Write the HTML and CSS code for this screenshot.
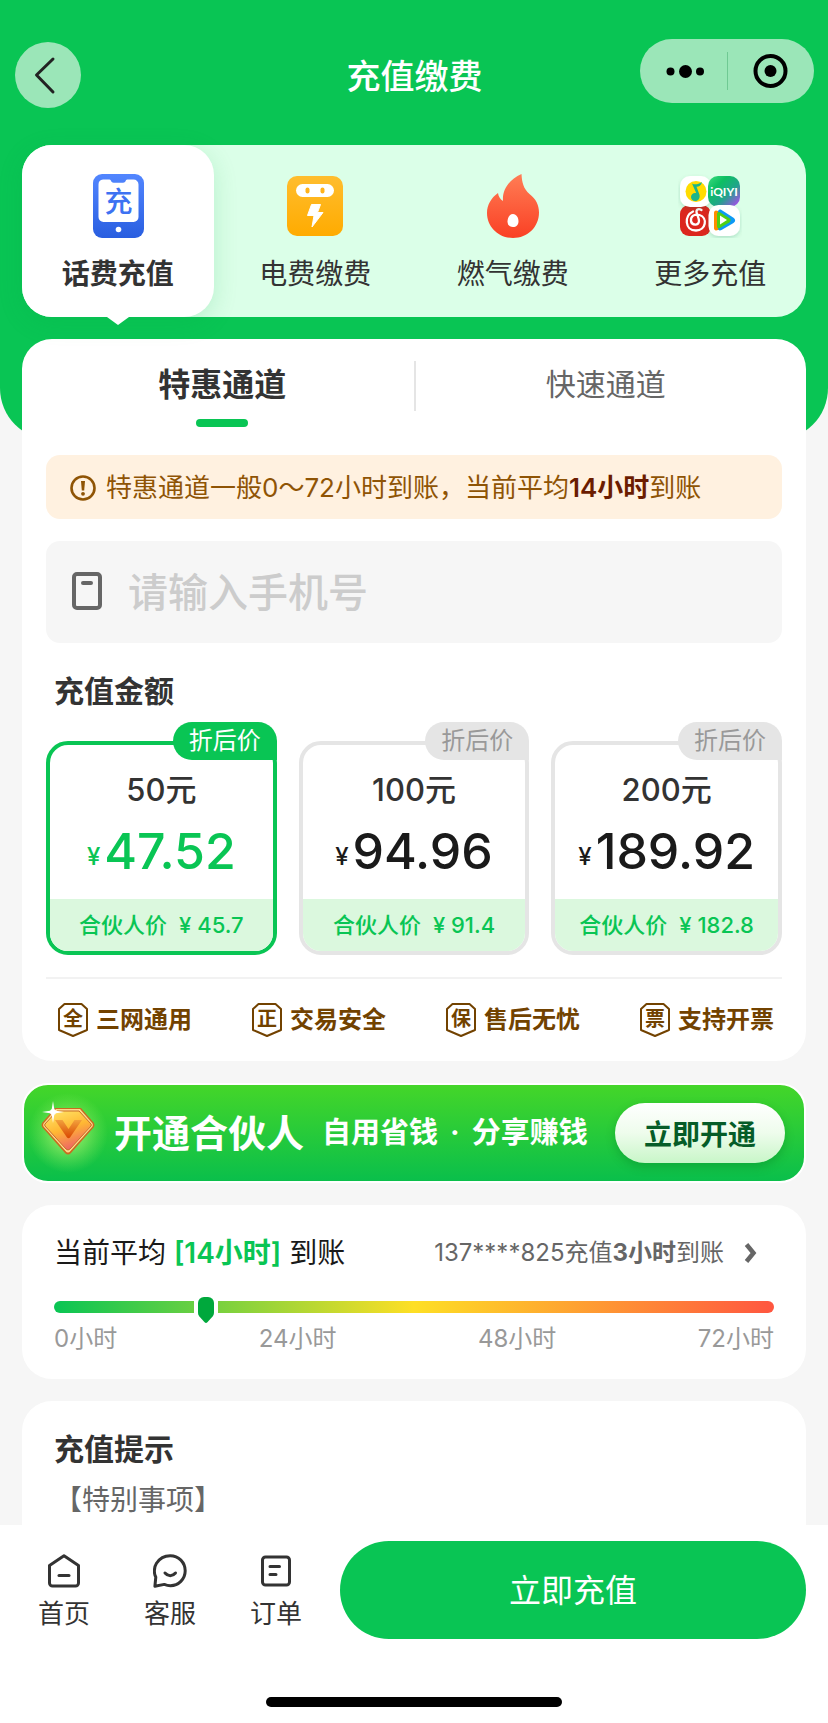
FILE: index.html
```html
<!DOCTYPE html>
<html lang="zh-CN">
<head>
<meta charset="utf-8">
<meta name="viewport" content="width=device-width, initial-scale=1">
<title>充值缴费</title>
<link rel="stylesheet" href="styles.css">
</head>
<body>
<div class="app">
  <main class="scroll">
    <div class="hero">
      <header class="topbar">
        <button class="back" type="button" aria-label="返回">
          <svg width="66" height="66" viewBox="0 0 66 66" fill="none" stroke="#222" stroke-width="3" stroke-linecap="round" stroke-linejoin="round"><path d="M38 17 21.500 33 38 50"/></svg>
        </button>
        <h1 class="topbar-title">充值缴费</h1>
        <div class="capsule">
          <button class="capsule-btn" type="button" aria-label="更多">
            <svg width="44" height="40" viewBox="0 0 44 40"><circle cx="9.500" cy="20.500" r="4"/><circle cx="24.500" cy="20.500" r="6.500"/><circle cx="39" cy="20.500" r="4"/></svg>
          </button>
          <span class="capsule-line"></span>
          <button class="capsule-btn" type="button" aria-label="关闭">
            <svg width="40" height="40" viewBox="0 0 40 40"><circle cx="19.500" cy="20" r="15" fill="none" stroke="#000" stroke-width="4"/><circle cx="19.500" cy="20" r="6"/></svg>
          </button>
        </div>
      </header>

      <nav class="services">
        <button class="service is-active" type="button">
          <svg class="service-icon" width="64" height="64" viewBox="0 0 64 64">
            <defs><linearGradient id="blue" x1="0" y1="0" x2="0" y2="1"><stop offset="0" stop-color="#5286ff"/><stop offset="1" stop-color="#295ee0"/></linearGradient></defs>
            <rect x="7" y="0" width="51" height="64" rx="9" fill="url(#blue)"/>
            <path d="M17 5.500h6.500c1 0 1.200.8 1.600 1.600.5 1.200 1.200 1.700 2.500 1.700h9.500c1.300 0 2-.5 2.500-1.700.4-.8.600-1.600 1.600-1.600H47.500a5 5 0 0 1 5 5V43a5 5 0 0 1-5 5H17.500a5 5 0 0 1-5-5V10.500a5 5 0 0 1 4.500-5z" fill="#fff"/>
            <circle cx="32.500" cy="55.500" r="2.800" fill="#fff"/>
            <text x="32.500" y="38" text-anchor="middle" class="phone-mark">充</text>
          </svg>
          <span>话费充值</span>
        </button>
        <button class="service" type="button">
          <svg class="service-icon" width="64" height="64" viewBox="0 0 64 64">
            <defs><linearGradient id="amber" x1="0" y1="0" x2="0" y2="1"><stop offset="0" stop-color="#ffbd2e"/><stop offset="1" stop-color="#ffab00"/></linearGradient></defs>
            <rect x="4" y="2" width="56" height="60" rx="10" fill="url(#amber)"/>
            <rect x="13" y="10" width="38" height="13" rx="6.500" fill="#fff"/>
            <rect x="22.500" y="13.500" width="4" height="6" rx="2" fill="#ffb31a"/><rect x="37.500" y="13.500" width="4" height="6" rx="2" fill="#ffb31a"/>
            <path d="M28.500 30.500h9l-3 8h5.500L29 53l2-11.500h-6.500z" fill="#fff" stroke="#fff" stroke-width="1" stroke-linejoin="round"/>
          </svg>
          <span>电费缴费</span>
        </button>
        <button class="service" type="button">
          <svg class="service-icon" width="64" height="64" viewBox="0 0 64 64">
            <defs><linearGradient id="fire" x1="0" y1="0" x2="0" y2="1"><stop offset="0" stop-color="#ff7d55"/><stop offset="1" stop-color="#fa4024"/></linearGradient></defs>
            <path d="M40.500 0c.5 9 2 14.500 8 20C55 25 58 31 58 38.500 58 53 46.500 64 32 64S6 53 6 39c0-8 4-15 11-20 .5 3.500 2 6 5 8C21 15 28.500 5.500 40.500 0z" fill="url(#fire)"/>
            <path d="M32 40c3.500 0 5.500 4 5.500 7.500s-2.300 5.500-5.500 5.500-5.500-2-5.500-5.500S28.500 40 32 40z" fill="#fff"/>
          </svg>
          <span>燃气缴费</span>
        </button>
        <button class="service" type="button">
          <svg class="service-icon" width="64" height="64" viewBox="0 0 64 64">
            <defs>
              <linearGradient id="iq" x1="0" y1="0" x2="1" y2="1"><stop offset="0" stop-color="#3ddd80"/><stop offset=".3" stop-color="#0dbf62"/><stop offset=".6" stop-color="#20a58a"/><stop offset="1" stop-color="#c03cff"/></linearGradient>
              <filter id="soft" x="-30%" y="-30%" width="160%" height="160%"><feDropShadow dx="0" dy="2" stdDeviation="2" flood-color="#0a7040" flood-opacity=".2"/></filter>
            </defs>
            <rect x="2" y="31" width="31" height="31" rx="9" fill="#dc261e"/>
            <g fill="none" stroke="#fff" stroke-width="2.300" stroke-linecap="round"><path d="M15 37.500c-9 4-8.500 19 3 19 10 0 12-13 3.500-15.500-6-1.500-9 2-8.500 6 .5 4.500 8 5 8 0 0-3-2-6-2.500-9-.3-3 2.500-3.500 5-2"/></g>
            <rect x="2" y="2" width="31" height="31" rx="10" fill="#fff" filter="url(#soft)"/>
            <circle cx="18" cy="17.500" r="10.500" fill="#ffdc00"/>
            <path d="M14 9.500c3 1.500 6 1 10-1.500-.8 3.500-3 4.800-5.500 4.800l3 8c.8 3.500-1.300 6.300-4.300 6.300-2.700 0-4.200-2-4.200-4 0-2.800 2.300-4.600 5.200-4z" fill="#1bb58a"/>
            <rect x="30" y="2" width="32" height="31" rx="10" fill="url(#iq)"/>
            <text x="46" y="22" text-anchor="middle" class="iq-mark">iQIYI</text>
            <rect x="30.500" y="31" width="31.500" height="31" rx="10" fill="#fff" filter="url(#soft)"/>
            <path d="M36 39c0-1.500.8-2.500 2-2.500l4 1v18l-4 1c-1.200 0-2-1-2-2.500z" fill="#ff8c00"/>
            <path d="M40 38c0-2 1.500-3 3.500-2l12 7.700c2.200 1.500 2.200 3.800 0 5.300L43.500 56c-2 1-3.500.2-3.500-2z" fill="#0c99f5"/>
            <path d="M39 40c0-2 1.500-2.500 3-1.700l9.500 6c1.500 1 1.500 3 0 4L42 54c-1.500.8-3 .3-3-1.700z" fill="#4fd016"/>
            <path d="M42 41.500v9l7-4.500z" fill="#fff"/>
          </svg>
          <span>更多充值</span>
        </button>
      </nav>
    </div>

    <section class="card recharge">
      <div class="tabs" role="tablist">
        <button class="tab is-active" type="button" role="tab" aria-selected="true">特惠通道</button>
        <button class="tab" type="button" role="tab" aria-selected="false">快速通道</button>
      </div>

      <p class="notice">
        <svg width="26" height="26" viewBox="0 0 26 26"><circle cx="13" cy="13" r="11.500" fill="none" stroke="#8f5405" stroke-width="2.600"/><path d="M11 6h4l-.8 9.500h-2.400z" fill="#8f5405"/><circle cx="13" cy="18.800" r="1.900" fill="#8f5405"/></svg>
        <span>特惠通道一般0～72小时到账，当前平均<strong>14小时</strong>到账</span>
      </p>

      <label class="phone">
        <svg width="30" height="38" viewBox="0 0 30 38" fill="none" stroke="#666" stroke-width="4" stroke-linecap="round"><rect x="2" y="2" width="26" height="34" rx="3"/><path d="M11 11h8"/></svg>
        <input type="tel" placeholder="请输入手机号" aria-label="手机号">
      </label>

      <h2 class="heading amount-heading">充值金额</h2>
      <div class="amounts">
        <label class="amount is-active">
          <input type="radio" name="amount" checked>
          <span class="tag">折后价</span>
          <span class="face">50元</span>
          <span class="price"><small>¥</small>47.52</span>
          <span class="partner"><span>合伙人价</span><span>¥ 45.7</span></span>
        </label>
        <label class="amount">
          <input type="radio" name="amount">
          <span class="tag">折后价</span>
          <span class="face">100元</span>
          <span class="price"><small>¥</small>94.96</span>
          <span class="partner"><span>合伙人价</span><span>¥ 91.4</span></span>
        </label>
        <label class="amount">
          <input type="radio" name="amount">
          <span class="tag">折后价</span>
          <span class="face">200元</span>
          <span class="price"><small>¥</small>189.92</span>
          <span class="partner"><span>合伙人价</span><span>¥ 182.8</span></span>
        </label>
      </div>

      <ul class="features">
        <li><svg width="30" height="34" viewBox="0 0 30 34"><path d="M6.500 1h17L29 6v21l-14 6L1 27V6z"/><text x="15" y="23">全</text></svg>三网通用</li>
        <li><svg width="30" height="34" viewBox="0 0 30 34"><path d="M6.500 1h17L29 6v21l-14 6L1 27V6z"/><text x="15" y="23">正</text></svg>交易安全</li>
        <li><svg width="30" height="34" viewBox="0 0 30 34"><path d="M6.500 1h17L29 6v21l-14 6L1 27V6z"/><text x="15" y="23">保</text></svg>售后无忧</li>
        <li><svg width="30" height="34" viewBox="0 0 30 34"><path d="M6.500 1h17L29 6v21l-14 6L1 27V6z"/><text x="15" y="23">票</text></svg>支持开票</li>
      </ul>
    </section>

    <section class="banner">
      <svg class="gem" width="80" height="80" viewBox="0 0 80 80">
        <defs>
          <radialGradient id="glow"><stop offset="0" stop-color="#d8ff80" stop-opacity=".8"/><stop offset=".5" stop-color="#b0f570" stop-opacity=".45"/><stop offset="1" stop-color="#8ff060" stop-opacity="0"/></radialGradient>
          <linearGradient id="gold" x1="0" y1="0" x2=".4" y2="1"><stop offset="0" stop-color="#ffe96b"/><stop offset=".55" stop-color="#ffb733"/><stop offset="1" stop-color="#ef6a62"/></linearGradient>
          <linearGradient id="vee" x1="0" y1="0" x2="0" y2="1"><stop offset="0" stop-color="#f2a13c"/><stop offset="1" stop-color="#d94700"/></linearGradient>
        </defs>
        <circle cx="40" cy="40" r="40" fill="url(#glow)"/>
        <path d="M27 15h26l13 15q1 2 0 4L43 60q-3 3-6 0L14 34q-1-2 0-4z" fill="#c96b20"/>
        <path d="M28 16h24l12.500 14.500q.8 1.500 0 3L42.500 58q-2.500 3-5 0L15.500 33.500q-.8-1.500 0-3z" fill="#ffd98a"/>
        <path d="M29 18h22l12 13q.6 1 0 2L42 56q-2 2-4 0L17 33q-.6-1 0-2z" fill="url(#gold)" stroke="#c76c2a" stroke-width="1"/>
        <path d="M27 27h7.500l6 9 6-9H54L42 44.500q-1.500 1.500-3 0z" fill="url(#vee)"/>
        <path d="M25 8l1.500 9.500L36 19l-9.500 1.500L25 30l-1.500-9.500L14 19l9.500-1.500z" fill="#fff"/>
        <circle cx="25" cy="19" r="3" fill="#fff"/>
      </svg>
      <strong class="banner-title">开通合伙人</strong>
      <p class="banner-text"><span>自用省钱</span><span>·</span><span>分享赚钱</span></p>
      <button class="banner-btn" type="button">立即开通</button>
    </section>

    <section class="card arrival">
      <div class="arrival-head">
        <p class="arrival-avg">当前平均 <b>[14小时]</b> 到账</p>
        <a class="arrival-recent" href="#records">137****825充值<b>3小时</b>到账
          <svg width="14" height="20" viewBox="0 0 14 20" fill="none" stroke="#666" stroke-width="4.500"><path d="M2.500 1.500 9.500 10 2.500 18.500"/></svg>
        </a>
      </div>
      <div class="meter">
        <span class="meter-pin" style="left:21.100%"><svg width="16" height="26" viewBox="0 0 16 26"><path d="M6 0h4a6 6 0 0 1 6 6v9c0 2-.4 3.200-1.400 4.500L9.400 25.200q-1.400 1.400-2.800 0L1.400 19.500C.4 18.200 0 17 0 15V6a6 6 0 0 1 6-6z" fill="#00a83c"/></svg></span>
      </div>
      <div class="meter-scale"><span>0小时</span><span>24小时</span><span>48小时</span><span>72小时</span></div>
    </section>

    <section class="card tips">
      <h2 class="heading">充值提示</h2>
      <p>【特别事项】</p>
    </section>
  </main>

  <footer class="dock">
    <div class="dock-row">
      <nav class="dock-nav">
        <a href="#home"><svg width="34" height="34" viewBox="0 0 34 34"><path d="M17 1.800 31.500 11.500V29a3 3 0 0 1-3 3h-23a3 3 0 0 1-3-3V11.500z"/><path d="M12 21.500h10"/></svg>首页</a>
        <a href="#service"><svg width="34" height="34" viewBox="0 0 34 34"><path d="M1.900 32.300 2.800 23C.8 20 .8 13.500 3.500 9.300 6.500 4.500 11.500 1.700 17.200 1.700c8.500 0 15 6.700 15 15.100S25.500 31.700 17.500 31.700c-2.300 0-4.300-.5-6.200-1.300z"/><path d="M12 19c3 3.600 7.500 3.600 10.500 0"/></svg>客服</a>
        <a href="#orders"><svg width="34" height="34" viewBox="0 0 34 34"><rect x="3.500" y="3" width="27" height="28" rx="3"/><path d="M11 12.500h9.500M11 20.500h6"/></svg>订单</a>
      </nav>
      <button class="submit" type="button">立即充值</button>
    </div>
    <div class="home-bar"></div>
  </footer>
</div>
</body>
</html>
```
FILE: styles.css
```css
:root {
  --green: #09c554;
  --ink: #333;
  --muted: #666;
  --brown: #724200;
}
* { box-sizing: border-box; }
body, h1, h2, p, ul { margin: 0; padding: 0; }
body {
  font-family: Inter, "Noto Sans CJK SC", sans-serif;
  color: var(--ink);
  background: #f6f6f6;
}
button, input { font: inherit; color: inherit; border: 0; padding: 0; background: none; }
a { color: inherit; text-decoration: none; }
svg { display: block; flex: none; }

.app { height: 100vh; display: flex; flex-direction: column; }
.scroll { flex: 1; min-height: 0; overflow-y: auto; scrollbar-width: none; }

/* Header */
.hero {
  background: var(--green);
  border-radius: 0 0 52px 52px;
  padding: 39px 22px 123px;
}
.topbar {
  display: grid;
  grid-template-columns: 1fr auto 1fr;
  align-items: end;
  min-height: 69px;
  margin: 0 -8px 0 -7px;
}
.back { width: 66px; height: 66px; border-radius: 50%; background: #9be6b8; }
.topbar-title { font-size: 34px; line-height: 62px; font-weight: 500; color: #fff; }
.capsule {
  justify-self: end;
  align-self: start;
  display: flex;
  align-items: center;
  width: 174px;
  height: 64px;
  border-radius: 32px;
  background: #9be6b8;
}
.capsule-btn { flex: 1; display: flex; justify-content: center; }
.capsule-line { width: 1px; height: 38px; background: #6fc993; }

/* Service switcher */
.services {
  display: grid;
  grid-template-columns: repeat(4, 1fr);
  gap: 6px;
  margin-top: 37px;
  border-radius: 30px;
  background: #dbffe8;
}
.service {
  position: relative;
  display: flex;
  flex-direction: column;
  align-items: center;
  gap: 15px;
  padding: 29px 0 22px;
  font-size: 28px;
  line-height: 42px;
  border-radius: 30px;
}
.service.is-active {
  background: #fff;
  font-weight: 700;
  box-shadow: 0 6px 24px rgba(8, 160, 70, .16);
}
.service.is-active::after {
  content: "";
  position: absolute;
  top: 100%;
  left: calc(50% - 11px);
  border: 11px solid transparent;
  border-top: 8px solid #fff;
  border-bottom: 0;
}
.phone-mark { font: 500 28px "Noto Sans CJK SC", sans-serif; fill: #3d72f2; }
.iq-mark { font: 700 12px Lato, sans-serif; fill: #fff; }

/* Cards */
.card { margin: 0 22px; background: #fff; border-radius: 30px; }
.heading { font-size: 30px; line-height: 46px; font-weight: 700; }
.recharge { margin-top: -101px; padding: 22px 24px 24px; }

.tabs { display: grid; grid-template-columns: 1fr 1fr; margin: 0 -14px 0 -15px; }
.tab {
  position: relative;
  padding-bottom: 3px;
  font-size: 30px;
  line-height: 47px;
  color: var(--muted);
}
.tab + .tab { border-left: 2px solid #e5e5e5; }
.tab.is-active { font-size: 32px; font-weight: 700; color: var(--ink); }
.tab.is-active::after {
  content: "";
  position: absolute;
  left: calc(50% - 26px);
  top: 58px;
  width: 52px;
  height: 8px;
  border-radius: 4px;
  background: var(--green);
}

.notice {
  display: flex;
  align-items: center;
  gap: 10px;
  margin-top: 44px;
  padding: 13px 24px 11px;
  border-radius: 14px;
  background: #fff1e0;
  color: #8f5405;
  font-size: 26px;
  line-height: 40px;
}
.notice strong { color: #6b1c00; font-weight: 600; }

.phone {
  display: flex;
  align-items: center;
  gap: 26px;
  margin-top: 22px;
  padding: 21px 26px;
  border-radius: 14px;
  background: #f6f6f6;
}
.phone svg { margin-bottom: 2px; }
.phone input { flex: 1; min-width: 0; height: 60px; font-size: 40px; font-weight: 500; outline: 0; }
.phone input::placeholder { color: #ccc; opacity: 1; }

.amount-heading { margin-top: 25px; padding-left: 8px; }
.amounts { display: grid; grid-template-columns: repeat(3, 1fr); gap: 22px; margin-top: 27px; }
.amount {
  --edge: #e5e5e5;
  position: relative;
  display: flex;
  flex-direction: column;
  align-items: center;
  border: 4px solid var(--edge);
  border-radius: 22px;
}
.amount.is-active { --edge: var(--green); }
.amount input { position: absolute; opacity: 0; }
.tag {
  position: absolute;
  right: -4px;
  top: -23px;
  padding: 0 16px;
  font-size: 24px;
  line-height: 38px;
  border-radius: 19px 19px 0 19px;
  background: var(--edge);
  color: #999;
}
.amount.is-active .tag { color: #fff; }
.face { margin-top: 21px; font-size: 31px; line-height: 48px; font-weight: 500; }
.price { display: flex; align-items: end; gap: 4px; margin-top: 7px; padding-bottom: 18px; font-size: 50px; line-height: 60px; font-weight: 500; color: #1a1a1a; }
.price small { font-size: 24px; line-height: 48px; }
.amount.is-active .price { color: var(--green); }
.partner {
  align-self: stretch;
  display: flex;
  justify-content: center;
  gap: 12px;
  border-radius: 0 0 18px 18px;
  background: #dbf8de;
  color: var(--green);
  font-size: 22px;
  line-height: 52px;
  font-weight: 500;
}

.features {
  display: flex;
  justify-content: space-between;
  margin-top: 22px;
  padding: 23px 8px 0 12px;
  border-top: 2px solid #f2f2f2;
  list-style: none;
  color: var(--brown);
  font-size: 24px;
  line-height: 35px;
  font-weight: 600;
}
.features li { display: flex; align-items: center; gap: 8px; }
.features path { fill: none; stroke: var(--brown); stroke-width: 2; stroke-linejoin: round; }
.features text { fill: var(--brown); font-size: 20px; font-weight: 600; text-anchor: middle; }

/* Partner banner */
.banner {
  display: flex;
  align-items: center;
  margin: 22px 22px 0;
  height: 100px;
  padding: 0 19px 0 3px;
  border: 2px solid #fff;
  border-radius: 26px;
  background: linear-gradient(#44d629, #0abf4b);
  color: #fff;
}
.gem { margin-left: 1px; }
.banner-title { margin-left: 6px; font-size: 38px; line-height: 60px; }
.banner-text { display: flex; gap: 12px; margin-left: 18px; font-size: 29px; line-height: 60px; font-weight: 700; }
.banner-btn {
  width: 170px;
  height: 60px;
  margin-left: auto;
  border-radius: 30px;
  background: linear-gradient(#fff, #eefcec 50%, #c8f6c8);
  box-shadow: 0 4px 10px rgba(0, 110, 30, .3);
  color: #065c28;
  font-size: 28px;
  font-weight: 600;
}

/* Arrival time */
.arrival { margin-top: 22px; padding: 27px 32px 22px; }
.arrival-head { display: flex; align-items: center; justify-content: space-between; line-height: 42px; }
.arrival-avg { font-size: 28px; color: #1a1a1a; }
.arrival-avg b { color: var(--green); font-weight: 600; }
.arrival-recent { display: flex; align-items: center; padding-right: 16px; font-size: 24px; color: var(--muted); }
.arrival-recent svg { margin-left: 20px; }
.meter {
  position: relative;
  height: 12px;
  margin-top: 27px;
  border-radius: 6px;
  background: linear-gradient(90deg, #09c554, #fedf25 50%, #ff5640);
}
.meter-pin {
  position: absolute;
  top: -4px;
  padding: 0 4px;
  background: #fff;
  transform: translateX(-50%);
}
.meter-scale { display: flex; justify-content: space-between; margin-top: 8px; font-size: 24px; line-height: 36px; color: #999; }

.tips { margin-top: 22px; margin-bottom: 22px; padding: 25px 32px 60px; }
.tips p { margin-top: 7px; font-size: 28px; line-height: 42px; color: var(--muted); }

/* Bottom dock */
.dock { background: #fff; padding: 16px 22px; }
.dock-row { display: flex; }
.dock-nav { flex: none; display: flex; margin-left: -11px; }
.dock-nav a {
  display: flex;
  flex-direction: column;
  align-items: center;
  gap: 6px;
  width: 106px;
  padding-top: 13px;
  font-size: 26px;
  line-height: 40px;
}
.dock-nav svg { fill: none; stroke: #333; stroke-width: 3; stroke-linecap: round; stroke-linejoin: round; }
.submit {
  flex: 1;
  height: 98px;
  margin-left: 11px;
  padding-bottom: 4px;
  border-radius: 49px;
  background: var(--green);
  color: #fff;
  font-size: 32px;
}
.home-bar { width: 296px; max-width: 60%; height: 10px; margin: 58px auto 0; border-radius: 5px; background: #000; }
```
